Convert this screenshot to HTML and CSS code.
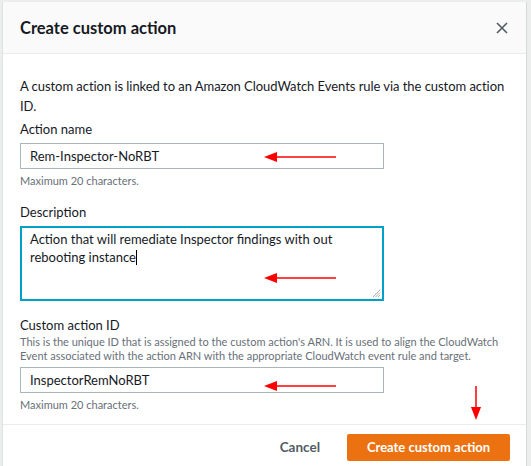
FILE: index.html
```html
<!DOCTYPE html>
<html>
<head>
<meta charset="utf-8">
<link rel="stylesheet" href="styles.css">
</head>
<body>
<div class="modal">
  <div class="header">
    <h2 class="title">Create custom action</h2>
    <svg class="close" width="12" height="12" viewBox="0 0 12 12"><path d="M1 1L11 11M11 1L1 11" stroke="#545b64" stroke-width="1.6" fill="none"/></svg>
  </div>
  <div class="content">
    <p class="intro">A custom action is linked to an Amazon CloudWatch Events rule via the custom action ID.</p>
    <div class="field">
      <div class="label">Action name</div>
      <div class="input">Rem-Inspector-NoRBT</div>
      <div class="hint">Maximum 20 characters.</div>
    </div>
    <div class="field">
      <div class="label">Description</div>
      <div class="textarea">Action that will remediate Inspector findings with out rebooting instance<span class="caret"></span>
        <svg class="grip" width="9" height="9" viewBox="0 0 9 9"><path d="M8 1L1 8M8 3.5L3.5 8M8 6L6 8" stroke="#999" stroke-width="0.8"/></svg>
      </div>
    </div>
    <div class="field last">
      <div class="label">Custom action ID</div>
      <div class="desc">This is the unique ID that is assigned to the custom action's ARN. It is used to align the CloudWatch Event associated with the action ARN with the appropriate CloudWatch event rule and target.</div>
      <div class="input">InspectorRemNoRBT</div>
      <div class="hint">Maximum 20 characters.</div>
    </div>
  </div>
  <div class="footer">
    <span class="cancel">Cancel</span>
    <span class="primary">Create custom action</span>
  </div>
</div>
<svg class="arrow a1" width="74" height="10" viewBox="0 0 74 10"><path d="M12 5H72" stroke="#f00" stroke-width="1.5"/><path d="M0 5L13 0V10Z" fill="#f00"/></svg>
<svg class="arrow a2" width="74" height="10" viewBox="0 0 74 10"><path d="M12 5H72" stroke="#f00" stroke-width="1.5"/><path d="M0 5L13 0V10Z" fill="#f00"/></svg>
<svg class="arrow a3" width="74" height="10" viewBox="0 0 74 10"><path d="M12 5H72" stroke="#f00" stroke-width="1.5"/><path d="M0 5L13 0V10Z" fill="#f00"/></svg>
<svg class="arrow a4" width="10" height="34" viewBox="0 0 10 34"><path d="M5 0V22" stroke="#f00" stroke-width="1.5"/><path d="M5 34L0 21H10Z" fill="#f00"/></svg>
</body>
</html>
```
FILE: styles.css
```css
html, body { margin: 0; padding: 0; }
body {
  background: #eceeee;
  font-family: Lato, "Liberation Sans", sans-serif;
  color: #16191f;
  width: 531px;
  height: 466px;
  overflow: hidden;
  position: relative;
}
.modal {
  margin: 2px 0 0 2px;
  width: 525px;
  height: 464px;
  background: #fff;
  border-left: 1px solid #dfe2e2;
  border-right: 1px solid #d5d9d9;
  box-sizing: border-box;
  display: flex;
  flex-direction: column;
}
.header {
  flex-shrink: 0;
  height: 52px;
  background: #fafafa;
  border-bottom: 1px solid #eaeded;
  display: flex;
  align-items: center;
  justify-content: space-between;
  padding: 0 18px 0 17px;
  box-sizing: border-box;
}
.title { margin: 0; font-size: 16.5px; font-weight: 700; }
.close { display: block; margin-top: 1px; }
.content { padding: 22px 0 0 17px; flex-shrink: 0; }
.intro { margin: 0 0 3px; font-size: 13px; line-height: 20px; width: 500px; letter-spacing: -0.05px; }
.field { margin-bottom: 13px; }
.field.last { margin: 14px 0 0; }
.label { font-size: 13px; line-height: 20px; }
.input {
  width: 364px; height: 26px; box-sizing: border-box;
  border: 1px solid #aab7b8;
  margin-top: 4px;
  padding: 0 9px;
  font-size: 13px; line-height: 24px;
}
.hint { font-size: 11px; color: #687078; line-height: 16px; margin-top: 4px; }
.textarea {
  position: relative;
  width: 364px; height: 75px; box-sizing: border-box;
  border: 2px solid #00a1c9;
  margin-top: 4px;
  padding: 2px 8px;
  font-size: 13px; line-height: 18px;
}
.caret { display: inline-block; width: 1px; height: 15px; background: #000; vertical-align: -3px; }
.grip { position: absolute; right: 1px; bottom: 1px; }
.desc { font-size: 11px; color: #687078; line-height: 14px; width: 490px; }
.desc + .input { margin-top: 4px; }
.footer {
  flex-shrink: 0;
  margin-top: auto;
  height: 42px;
  box-sizing: border-box;
  border-top: 1px solid #eaeded;
  display: flex;
  justify-content: flex-end;
  align-items: flex-start;
  padding: 9px 16px 0 0;
}
.cancel { font-size: 13.5px; font-weight: 700; color: #545b64; line-height: 27px; margin-right: 27px; }
.primary {
  background: #ec7211; color: #fff; font-size: 13px; font-weight: 700;
  height: 27px; line-height: 27px; width: 163px; text-align: center;
  border-radius: 2px;
}
.arrow { position: absolute; }
.a1 { left: 264px; top: 152px; }
.a2 { left: 264px; top: 273px; }
.a3 { left: 264px; top: 381px; }
.a4 { left: 471px; top: 386px; }
```
